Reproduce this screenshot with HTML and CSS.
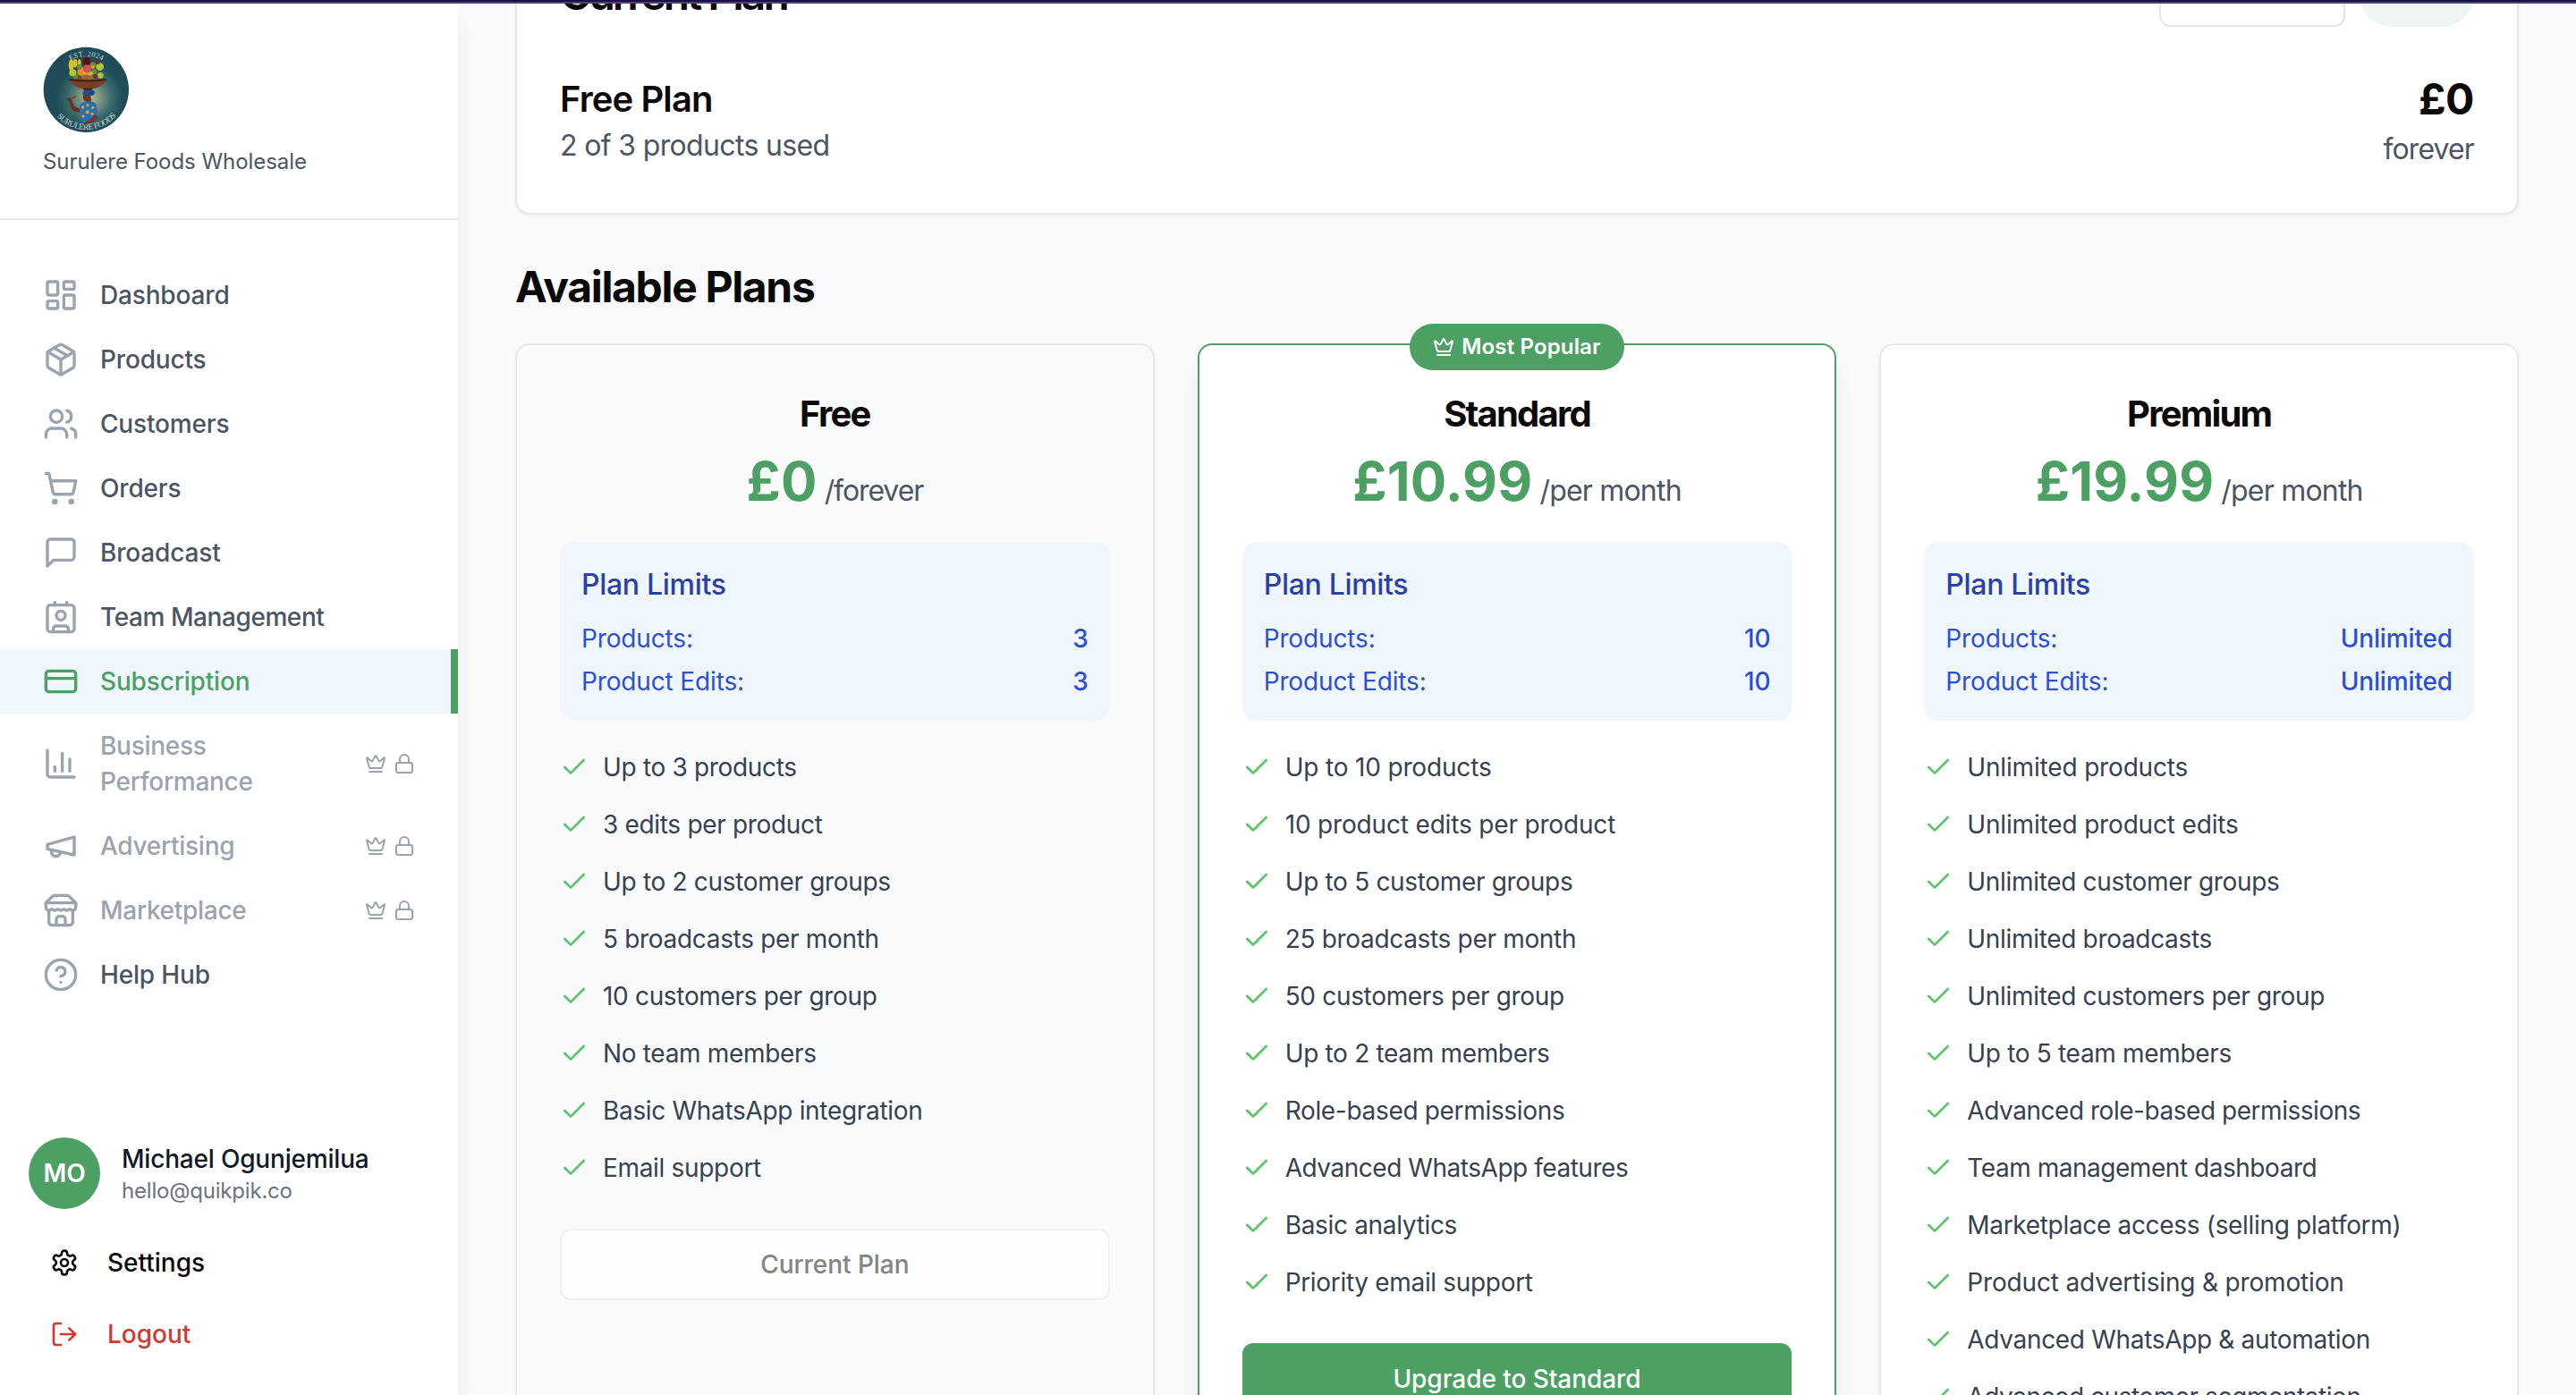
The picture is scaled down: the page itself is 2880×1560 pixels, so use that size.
FILE: index.html
```html
<!DOCTYPE html>
<html lang="en">
<head>
<meta charset="utf-8">
<title>Subscription</title>
<link rel="stylesheet" href="styles.css">
</head>
<body>
<svg class="sprite" aria-hidden="true">
  <symbol id="dashboard" viewBox="0 0 24 24"><rect width="7" height="9" x="3" y="3" rx="1"/><rect width="7" height="5" x="14" y="3" rx="1"/><rect width="7" height="9" x="14" y="12" rx="1"/><rect width="7" height="5" x="3" y="16" rx="1"/></symbol>
  <symbol id="package" viewBox="0 0 24 24"><path d="m7.5 4.27 9 5.15"/><path d="M21 8a2 2 0 0 0-1-1.73l-7-4a2 2 0 0 0-2 0l-7 4A2 2 0 0 0 3 8v8a2 2 0 0 0 1 1.73l7 4a2 2 0 0 0 2 0l7-4A2 2 0 0 0 21 16Z"/><path d="m3.3 7 8.7 5 8.7-5"/><path d="M12 22V12"/></symbol>
  <symbol id="users" viewBox="0 0 24 24"><path d="M16 21v-2a4 4 0 0 0-4-4H6a4 4 0 0 0-4 4v2"/><circle cx="9" cy="7" r="4"/><path d="M22 21v-2a4 4 0 0 0-3-3.87"/><path d="M16 3.13a4 4 0 0 1 0 7.75"/></symbol>
  <symbol id="cart" viewBox="0 0 24 24"><circle cx="8" cy="21" r="1"/><circle cx="19" cy="21" r="1"/><path d="M2.05 2.05h2l2.66 12.42a2 2 0 0 0 2 1.58h9.78a2 2 0 0 0 1.95-1.57l1.65-7.43H5.12"/></symbol>
  <symbol id="message" viewBox="0 0 24 24"><path d="M21 15a2 2 0 0 1-2 2H7l-4 4V5a2 2 0 0 1 2-2h14a2 2 0 0 1 2 2z"/></symbol>
  <symbol id="contact" viewBox="0 0 24 24"><path d="M16 2v2"/><path d="M7 22v-2a2 2 0 0 1 2-2h6a2 2 0 0 1 2 2v2"/><path d="M8 2v2"/><circle cx="12" cy="11" r="3"/><rect x="3" y="4" width="18" height="18" rx="2"/></symbol>
  <symbol id="card" viewBox="0 0 24 24"><rect width="20" height="14" x="2" y="5" rx="2"/><path d="M2 10h20"/></symbol>
  <symbol id="chart" viewBox="0 0 24 24"><path d="M3 3v16a2 2 0 0 0 2 2h16"/><path d="M18 17V9"/><path d="M13 17V5"/><path d="M8 17v-3"/></symbol>
  <symbol id="megaphone" viewBox="0 0 24 24"><path d="m3 11 18-5v12L3 14v-3z"/><path d="M11.6 16.8a3 3 0 1 1-5.8-1.6"/></symbol>
  <symbol id="store" viewBox="0 0 24 24"><path d="m2 7 4.41-4.41A2 2 0 0 1 7.83 2h8.34a2 2 0 0 1 1.42.59L22 7"/><path d="M4 12v8a2 2 0 0 0 2 2h12a2 2 0 0 0 2-2v-8"/><path d="M15 22v-4a2 2 0 0 0-2-2h-2a2 2 0 0 0-2 2v4"/><path d="M2 7h20"/><path d="M22 7v3a2 2 0 0 1-2 2a2.7 2.7 0 0 1-1.59-.63.7.7 0 0 0-.82 0A2.7 2.7 0 0 1 16 12a2.7 2.7 0 0 1-1.59-.63.7.7 0 0 0-.82 0A2.7 2.7 0 0 1 12 12a2.7 2.7 0 0 1-1.59-.63.7.7 0 0 0-.82 0A2.7 2.7 0 0 1 8 12a2.7 2.7 0 0 1-1.59-.63.7.7 0 0 0-.82 0A2.7 2.7 0 0 1 4 12a2 2 0 0 1-2-2V7"/></symbol>
  <symbol id="help" viewBox="0 0 24 24"><circle cx="12" cy="12" r="10"/><path d="M9.09 9a3 3 0 0 1 5.83 1c0 2-3 3-3 3"/><path d="M12 17h.01"/></symbol>
  <symbol id="crown" viewBox="0 0 24 24"><path d="M11.562 3.266a.5.5 0 0 1 .876 0L15.39 8.87a1 1 0 0 0 1.516.294L21.183 5.5a.5.5 0 0 1 .798.519l-2.834 10.246a1 1 0 0 1-.956.734H5.81a1 1 0 0 1-.957-.734L2.02 6.02a.5.5 0 0 1 .798-.519l4.276 3.664a1 1 0 0 0 1.516-.294z"/><path d="M5 21h14"/></symbol>
  <symbol id="lock" viewBox="0 0 24 24"><rect width="18" height="11" x="3" y="11" rx="2"/><path d="M7 11V7a5 5 0 0 1 10 0v4"/></symbol>
  <symbol id="settings" viewBox="0 0 24 24"><path d="M12.22 2h-.44a2 2 0 0 0-2 2v.18a2 2 0 0 1-1 1.73l-.43.25a2 2 0 0 1-2 0l-.15-.08a2 2 0 0 0-2.73.73l-.22.38a2 2 0 0 0 .73 2.73l.15.1a2 2 0 0 1 1 1.72v.51a2 2 0 0 1-1 1.74l-.15.09a2 2 0 0 0-.73 2.73l.22.38a2 2 0 0 0 2.73.73l.15-.08a2 2 0 0 1 2 0l.43.25a2 2 0 0 1 1 1.73V20a2 2 0 0 0 2 2h.44a2 2 0 0 0 2-2v-.18a2 2 0 0 1 1-1.73l.43-.25a2 2 0 0 1 2 0l.15.08a2 2 0 0 0 2.73-.73l.22-.39a2 2 0 0 0-.73-2.73l-.15-.08a2 2 0 0 1-1-1.74v-.5a2 2 0 0 1 1-1.74l.15-.09a2 2 0 0 0 .73-2.73l-.22-.38a2 2 0 0 0-2.73-.73l-.15.08a2 2 0 0 1-2 0l-.43-.25a2 2 0 0 1-1-1.73V4a2 2 0 0 0-2-2z"/><circle cx="12" cy="12" r="3"/></symbol>
  <symbol id="logout" viewBox="0 0 24 24"><path d="M9 21H5a2 2 0 0 1-2-2V5a2 2 0 0 1 2-2h4"/><path d="m16 17 5-5-5-5"/><path d="M21 12H9"/></symbol>
  <symbol id="check" viewBox="0 0 24 24"><path d="M20 6 9 17l-5-5"/></symbol>
</svg>

<div class="browser-edge"></div>
<div class="app">
  <aside class="sidebar">
    <header class="brand">
      <svg class="brand-logo" viewBox="54 36 288 288">
        <defs>
          <radialGradient id="glow" gradientUnits="userSpaceOnUse" cx="212" cy="208" r="112">
            <stop offset="0" stop-color="#b5bd98"/><stop offset=".3" stop-color="#7d9684"/><stop offset=".65" stop-color="#3b6a6b"/><stop offset="1" stop-color="#1f4c58"/>
          </radialGradient>
          <path id="arc-top" d="M87 181a112 112 0 0 1 224 0"/>
          <path id="arc-bottom" d="M65 181a134 134 0 0 0 268 0"/>
        </defs>
        <circle cx="199" cy="181" r="143" fill="url(#glow)"/>
        <text class="logo-text" font-size="25"><textPath href="#arc-top" startOffset="50%" text-anchor="middle" textLength="112">EST. 2024</textPath></text>
        <text class="logo-text" font-size="28"><textPath href="#arc-bottom" startOffset="50.5%" text-anchor="middle" textLength="226">SURULERE FOODS</textPath></text>
        <g fill="#d8bd2c"><ellipse cx="149" cy="98" rx="9" ry="19"/><ellipse cx="162" cy="92" rx="7" ry="14"/><ellipse cx="176" cy="92" rx="6" ry="13"/><ellipse cx="188" cy="124" rx="13" ry="18"/><circle cx="205" cy="132" r="14"/></g>
        <g fill="#6d8d28"><circle cx="177" cy="105" r="9"/><circle cx="222" cy="98" r="10"/><circle cx="226" cy="121" r="9"/><circle cx="163" cy="136" r="8"/><circle cx="191" cy="138" r="8"/><circle cx="214" cy="138" r="8"/></g>
        <g fill="#b0c63a"><circle cx="154" cy="124" r="12"/><circle cx="245" cy="104" r="13"/><circle cx="247" cy="133" r="10"/><circle cx="215" cy="126" r="7"/></g>
        <circle cx="201" cy="86" r="13" fill="#5d1019"/><circle cx="238" cy="90" r="6" fill="#8a1a2c"/><circle cx="230" cy="136" r="8" fill="#8c2138"/><circle cx="202" cy="111" r="14" fill="#dd4b58"/><circle cx="179" cy="122" r="10" fill="#f08a2b"/><circle cx="202" cy="138" r="8" fill="#c9463a"/><circle cx="178" cy="139" r="6" fill="#a03038"/><circle cx="221" cy="105" r="6" fill="#e79a35"/>
        <path d="M142 146h124c-6 17-24 28-42 31h-38c-20-3-38-15-44-31z" fill="#7d3d22"/>
        <path d="M142 147q62 9 124 0" fill="none" stroke="#3c1a12" stroke-width="5"/>
        <path d="M186 176h36l-7 8h-22z" fill="#3b2018"/>
        <path d="M186 197q2-16 18-17 20-1 25 10-3 12-16 12-13-6-27-5z" fill="#1d4b93"/>
        <path d="M190 196q13-2 23 6l4 12-6 15-8-7q-12-2-12-8l-3-4z" fill="#6d3522"/>
        <path d="M141 218q-9-1-6-8l8-2 6 4 10 25 20 9-4 13-18-7q-6-3-8-10z" fill="#6a2d20"/>
        <path d="M147 212l18-9" stroke="#7c3d25" stroke-width="4"/>
        <path d="M177 233q10-12 28-13 24 0 29 13l3 28-9 14q-3 15-12 18l-30-2q-8-12-4-22-8-18-5-36z" fill="#286fae"/>
        <g fill="#d9a045"><circle cx="188" cy="240" r="5"/><circle cx="204" cy="233" r="5"/><circle cx="221" cy="241" r="5"/><circle cx="203" cy="256" r="6"/><circle cx="189" cy="270" r="5"/><circle cx="219" cy="262" r="5"/></g>
        <path d="M228 264l10 5q-3 18-20 22l-24 10-4-6 24-15z" fill="#743823"/>
      </svg>
      <p class="brand-name">Surulere Foods Wholesale</p>
    </header>
    <nav class="nav">
      <a class="nav-item"><svg class="icon"><use href="#dashboard"/></svg><span>Dashboard</span></a>
      <a class="nav-item"><svg class="icon"><use href="#package"/></svg><span>Products</span></a>
      <a class="nav-item"><svg class="icon"><use href="#users"/></svg><span>Customers</span></a>
      <a class="nav-item"><svg class="icon"><use href="#cart"/></svg><span>Orders</span></a>
      <a class="nav-item"><svg class="icon"><use href="#message"/></svg><span>Broadcast</span></a>
      <a class="nav-item"><svg class="icon"><use href="#contact"/></svg><span class="snug">Team Management</span></a>
      <a class="nav-item active"><svg class="icon"><use href="#card"/></svg><span>Subscription</span></a>
      <a class="nav-item locked"><svg class="icon"><use href="#chart"/></svg><span>Business Performance</span><span class="marks"><svg class="icon"><use href="#crown"/></svg><svg class="icon"><use href="#lock"/></svg></span></a>
      <a class="nav-item locked"><svg class="icon"><use href="#megaphone"/></svg><span>Advertising</span><span class="marks"><svg class="icon"><use href="#crown"/></svg><svg class="icon"><use href="#lock"/></svg></span></a>
      <a class="nav-item locked"><svg class="icon"><use href="#store"/></svg><span>Marketplace</span><span class="marks"><svg class="icon"><use href="#crown"/></svg><svg class="icon"><use href="#lock"/></svg></span></a>
      <a class="nav-item"><svg class="icon"><use href="#help"/></svg><span>Help Hub</span></a>
    </nav>
    <footer class="account">
      <div class="user">
        <div class="avatar">MO</div>
        <div><p class="user-name">Michael Ogunjemilua</p><p class="user-mail">hello@quikpik.co</p></div>
      </div>
      <a class="account-link"><svg class="icon"><use href="#settings"/></svg>Settings</a>
      <a class="account-link danger"><svg class="icon"><use href="#logout"/></svg>Logout</a>
    </footer>
  </aside>

  <main class="main">
    <section class="current">
      <div class="current-head">
        <h2>Current Plan</h2>
        <div class="current-actions"><span class="ghost-button"></span><span class="status-pill"></span></div>
      </div>
      <div class="current-body">
        <div><h3>Free Plan</h3><p>2 of 3 products used</p></div>
        <div class="current-price"><strong>£0</strong><p class="tight">forever</p></div>
      </div>
    </section>

    <h2 class="section-title">Available Plans</h2>

    <div class="plans">
      <article class="plan muted">
        <h3>Free</h3>
        <div class="price"><strong>£0</strong><span class="tight">/forever</span></div>
        <div class="limits">
          <h4>Plan Limits</h4>
          <div class="limit"><span>Products:</span><b>3</b></div>
          <div class="limit"><span>Product Edits:</span><b>3</b></div>
        </div>
        <ul class="features">
          <li><svg class="icon"><use href="#check"/></svg>Up to 3 products</li>
          <li><svg class="icon"><use href="#check"/></svg>3 edits per product</li>
          <li><svg class="icon"><use href="#check"/></svg>Up to 2 customer groups</li>
          <li><svg class="icon"><use href="#check"/></svg>5 broadcasts per month</li>
          <li><svg class="icon"><use href="#check"/></svg>10 customers per group</li>
          <li><svg class="icon"><use href="#check"/></svg>No team members</li>
          <li><svg class="icon"><use href="#check"/></svg>Basic WhatsApp integration</li>
          <li><svg class="icon"><use href="#check"/></svg>Email support</li>
        </ul>
        <button class="plan-button disabled">Current Plan</button>
      </article>

      <article class="plan popular">
        <div class="popular-badge"><svg class="icon"><use href="#crown"/></svg>Most Popular</div>
        <h3>Standard</h3>
        <div class="price"><strong>£10.99</strong><span>/per month</span></div>
        <div class="limits">
          <h4>Plan Limits</h4>
          <div class="limit"><span>Products:</span><b>10</b></div>
          <div class="limit"><span>Product Edits:</span><b>10</b></div>
        </div>
        <ul class="features">
          <li class="loose"><svg class="icon"><use href="#check"/></svg>Up to 10 products</li>
          <li class="loose"><svg class="icon"><use href="#check"/></svg>10 product edits per product</li>
          <li><svg class="icon"><use href="#check"/></svg>Up to 5 customer groups</li>
          <li><svg class="icon"><use href="#check"/></svg>25 broadcasts per month</li>
          <li><svg class="icon"><use href="#check"/></svg>50 customers per group</li>
          <li><svg class="icon"><use href="#check"/></svg>Up to 2 team members</li>
          <li><svg class="icon"><use href="#check"/></svg>Role-based permissions</li>
          <li class="snug"><svg class="icon"><use href="#check"/></svg>Advanced WhatsApp features</li>
          <li><svg class="icon"><use href="#check"/></svg>Basic analytics</li>
          <li><svg class="icon"><use href="#check"/></svg>Priority email support</li>
        </ul>
        <button class="plan-button">Upgrade to Standard</button>
      </article>

      <article class="plan">
        <h3>Premium</h3>
        <div class="price"><strong>£19.99</strong><span>/per month</span></div>
        <div class="limits">
          <h4>Plan Limits</h4>
          <div class="limit"><span>Products:</span><b>Unlimited</b></div>
          <div class="limit"><span>Product Edits:</span><b>Unlimited</b></div>
        </div>
        <ul class="features">
          <li class="loose"><svg class="icon"><use href="#check"/></svg>Unlimited products</li>
          <li class="loose"><svg class="icon"><use href="#check"/></svg>Unlimited product edits</li>
          <li><svg class="icon"><use href="#check"/></svg>Unlimited customer groups</li>
          <li><svg class="icon"><use href="#check"/></svg>Unlimited broadcasts</li>
          <li><svg class="icon"><use href="#check"/></svg>Unlimited customers per group</li>
          <li><svg class="icon"><use href="#check"/></svg>Up to 5 team members</li>
          <li class="snug"><svg class="icon"><use href="#check"/></svg>Advanced role-based permissions</li>
          <li class="snug"><svg class="icon"><use href="#check"/></svg>Team management dashboard</li>
          <li><svg class="icon"><use href="#check"/></svg>Marketplace access (selling platform)</li>
          <li class="loose"><svg class="icon"><use href="#check"/></svg>Product advertising &amp; promotion</li>
          <li><svg class="icon"><use href="#check"/></svg>Advanced WhatsApp &amp; automation</li>
          <li class="snug"><svg class="icon"><use href="#check"/></svg>Advanced customer segmentation</li>
        </ul>
      </article>
    </div>
  </main>
</div>
</body>
</html>
```
FILE: styles.css
```css
*, *::before, *::after { box-sizing: border-box; }

body {
  margin: 0;
  position: relative;
  height: 1560px;
  overflow: hidden;
  background: #f9fafc;
  color: #0c0a09;
  font-family: Inter, "Liberation Sans", sans-serif;
  font-size: 28px;
  line-height: 40px;
  letter-spacing: -.007em;
}

h2, h3, h4, p, ul { margin: 0; padding: 0; }

.sprite { position: absolute; width: 0; height: 0; }

.icon {
  flex: none;
  width: 32px;
  height: 32px;
  fill: none;
  stroke: currentColor;
  stroke-width: 2;
  stroke-linecap: round;
  stroke-linejoin: round;
}

.browser-edge {
  position: absolute;
  z-index: 5;
  inset: 0 0 auto;
  height: 4px;
  background: #1a0f48;
  border-bottom: 2px solid #4b4271;
}

.app { display: flex; height: 1560px; overflow: hidden; }

/* Sidebar */
.sidebar {
  position: relative;
  z-index: 1;
  display: flex;
  flex-direction: column;
  flex: none;
  width: 512px;
  background: #fff;
  box-shadow: 0 20px 30px -6px rgba(0, 0, 0, .1), 0 8px 12px -8px rgba(0, 0, 0, .1);
}

.brand {
  height: 246px;
  padding: 52px 48px 0;
  border-bottom: 2px solid #e5e7eb;
}

.brand-logo { display: block; width: 96px; height: 96px; }
.logo-text { fill: #c9dcd6; font-family: "Liberation Serif", serif; letter-spacing: 0; }

.brand-name {
  margin-top: 17px;
  color: #4b5563;
  font-size: 24px;
  line-height: 32px;
  letter-spacing: -.002em;
}

.nav { padding-top: 48px; }

.nav-item {
  display: flex;
  align-items: center;
  gap: 24px;
  min-height: 72px;
  padding: 16px 48px;
  color: #4b5563;
  font-weight: 500;
  letter-spacing: -.006em;
}

.nav-item > .icon { width: 40px; height: 40px; color: #9ca3af; }
.nav-item .snug { letter-spacing: -.015em; }

.nav-item.active {
  background: #eff6fe;
  border-right: 8px solid #4ca064;
  color: #4ca064;
}
.nav-item.active > .icon { color: #4ca064; }

.nav-item.locked { color: #9ca3af; letter-spacing: -.01em; }
.marks { display: flex; gap: 8px; margin-left: auto; }
.marks .icon { width: 24px; height: 24px; }

.account { margin-top: auto; padding: 0 32px 32px; }
.user { display: flex; align-items: center; gap: 24px; margin-bottom: 24px; }

.avatar {
  display: grid;
  place-items: center;
  width: 80px;
  height: 80px;
  border-radius: 50%;
  background: #4ca064;
  color: #fff;
  font-weight: 600;
}

.user-name { color: #111827; font-weight: 500; }
.user-mail { color: #6b7280; font-size: 24px; line-height: 32px; }

.account-link {
  display: flex;
  align-items: center;
  gap: 32px;
  height: 72px;
  padding: 0 24px;
  font-weight: 500;
  letter-spacing: 0;
}
.account-link + .account-link { margin-top: 8px; }
.danger { color: #cf3a30; }

/* Main column, scrolled past the top of the first card */
.main { flex: 1; margin-top: -92px; padding: 0 64px; }

.current {
  padding: 48px 48px 47px;
  border: 2px solid #e7e5e4;
  border-radius: 16px;
  background: #fff;
  box-shadow: 0 2px 4px rgba(0, 0, 0, .05);
}

.current-head, .current-body { display: flex; align-items: center; justify-content: space-between; }
.current-head { height: 72px; margin-bottom: 49px; }
.current-head h2 { font-size: 48px; line-height: 48px; font-weight: 600; letter-spacing: -.062em; }
.current-actions { display: flex; gap: 16px; }
.ghost-button { width: 208px; height: 72px; border: 2px solid #e5e5e5; border-radius: 12px; }
.status-pill { width: 128px; height: 72px; border-radius: 36px; background: #eff5f3; }

.current-body h3 { font-size: 40px; line-height: 56px; font-weight: 600; letter-spacing: -.0226em; }
.current-body p { color: #4b5563; font-size: 32px; line-height: 48px; letter-spacing: -.0205em; }
.current-price { text-align: right; }
.current-price strong { display: block; font-size: 48px; line-height: 64px; letter-spacing: -.01em; }
.current-body p.tight, .price .tight { letter-spacing: -.034em; }
.current-body p.tight { letter-spacing: -.028em; }

.section-title { margin: 49px 0 31px; font-size: 48px; line-height: 64px; font-weight: 700; letter-spacing: -.028em; }

.plans { display: grid; grid-template-columns: repeat(3, 1fr); gap: 48px; }

.plan {
  position: relative;
  height: 1420px;
  padding: 49px 48px 48px;
  border: 2px solid #e5e7eb;
  border-radius: 16px;
  background: #fff;
  box-shadow: 0 2px 4px rgba(0, 0, 0, .05);
}
.plan.muted { background: #f9fafc; }
.plan.popular {
  border-color: #4ca064;
  box-shadow: 0 20px 30px -6px rgba(0, 0, 0, .1), 0 8px 12px -8px rgba(0, 0, 0, .1);
}

.popular-badge {
  position: absolute;
  top: -24px;
  left: 50%;
  transform: translateX(-50%);
  display: flex;
  align-items: center;
  justify-content: center;
  gap: 8px;
  width: 240px;
  height: 52px;
  border-radius: 26px;
  background: #4ca064;
  color: #fff;
  font-size: 24px;
  font-weight: 600;
  letter-spacing: .006em;
  white-space: nowrap;
}
.popular-badge .icon { width: 24px; height: 24px; }

.plan h3 { font-size: 40px; line-height: 56px; font-weight: 700; letter-spacing: -.045em; text-align: center; }

.price {
  display: flex;
  align-items: baseline;
  justify-content: center;
  gap: 8px;
  height: 72px;
  margin: 11px 0 32px;
}
.price strong { color: #4ca064; font-size: 60px; line-height: 72px; letter-spacing: .003em; }
.price span { color: #4b5563; font-size: 32px; letter-spacing: -.025em; }

.limits { padding: 24px; border-radius: 16px; background: #eff6fe; color: #2d50d1; }
.limits h4 { margin-bottom: 16px; color: #2a3fa9; font-size: 32px; line-height: 48px; font-weight: 500; letter-spacing: -.0097em; }
.limit { display: flex; justify-content: space-between; letter-spacing: -.005em; }
.limit + .limit { margin-top: 8px; }
.limit b { font-weight: 500; }

.features { display: grid; gap: 24px; margin: 32px 0 48px; list-style: none; color: #374151; letter-spacing: -.0115em; white-space: nowrap; }
.features li { display: flex; align-items: center; gap: 16px; }
.features .loose { letter-spacing: -.006em; }
.features .snug { letter-spacing: -.0165em; }
.features .icon { color: #5bc465; }

.plan-button {
  display: block;
  width: 100%;
  height: 80px;
  padding: 0;
  border: 0;
  border-radius: 12px;
  background: #4ca064;
  color: #fff;
  font: inherit;
  font-weight: 500;
  letter-spacing: -.002em;
}
.plan-button.disabled { border: 2px solid #eff0f0; background: #fcfdfd; color: #838483; }
```
